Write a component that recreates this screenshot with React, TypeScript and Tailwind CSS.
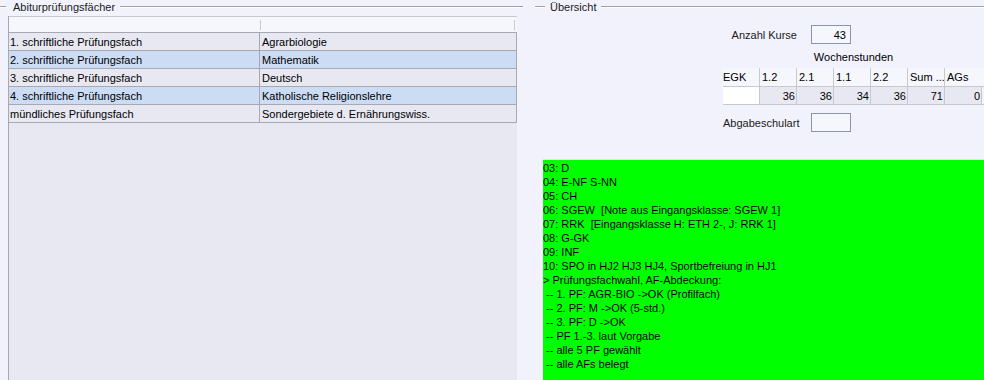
const rows = [
  { a: "1. schriftliche Prüfungsfach", b: "Agrarbiologie", sel: false },
  { a: "2. schriftliche Prüfungsfach", b: "Mathematik", sel: true },
  { a: "3. schriftliche Prüfungsfach", b: "Deutsch", sel: false },
  { a: "4. schriftliche Prüfungsfach", b: "Katholische Religionslehre", sel: true },
  { a: "mündliches Prüfungsfach", b: "Sondergebiete d. Ernährungswiss.", sel: false },
];

const cols = ["EGK", "1.2", "2.1", "1.1", "2.2", "Sum ...", "AGs"];
const vals = ["", "36", "36", "34", "36", "71", "0"];

const notes = [
  "03: D",
  "04: E-NF S-NN",
  "05: CH",
  "06: SGEW  [Note aus Eingangsklasse: SGEW 1]",
  "07: RRK  [Eingangsklasse H: ETH 2-, J: RRK 1]",
  "08: G-GK",
  "09: INF",
  "10: SPO in HJ2 HJ3 HJ4, Sportbefreiung in HJ1",
  "> Prüfungsfachwahl, AF-Abdeckung:",
  " -- 1. PF: AGR-BIO ->OK (Profilfach)",
  " -- 2. PF: M ->OK (5-std.)",
  " -- 3. PF: D ->OK",
  " -- PF 1.-3. laut Vorgabe",
  " -- alle 5 PF gewählt",
  " -- alle AFs belegt",
];

function Legend({ title, lead, gap }: { title: string; lead: number; gap: number }) {
  return (
    <div className="flex items-center h-[14px]">
      <div className="h-[2px] border-t border-[#a0a0a8] border-b-white border-b" style={{ width: lead }} />
      <span className="px-[5px] text-[#1a1a1a]" style={{ marginLeft: gap }}>{title}</span>
      <div className="flex-1 h-[2px] border-t border-[#a0a0a8] border-b border-b-white" />
    </div>
  );
}

export default function App() {
  return (
    <div className="w-[984px] h-[380px] overflow-hidden bg-[#f2f2fd] flex text-[11px] leading-[14px] text-black" style={{ fontFamily: '"Liberation Sans", Arial, sans-serif' }}>
      {/* Abiturprüfungsfächer */}
      <div className="w-[523px] flex flex-col">
        <Legend title="Abiturprüfungsfächer" lead={6} gap={2} />
        <div className="ml-[8px] mt-[2px] w-[509px] flex-1 flex flex-col bg-[#e8e8f2] border-l border-[#a8a8b0]">
          <div className="h-[16px] bg-[#f6f6fd] border-t border-[#c8c8d0] flex items-center">
            <div className="w-[251px] h-full" />
            <div className="w-px h-[10px] bg-[#c8c8d0]" />
            <div className="flex-1" />
            <div className="w-px h-[10px] bg-[#c8c8d0] mr-[2px]" />
          </div>
          {rows.map((r) => (
            <div key={r.a} className={`flex h-[18px] border-t border-[#a8a8b0] border-r ${r.sel ? "bg-[#ccdcf5]" : "bg-[#e8e8f2]"}`}>
              <div className="w-[251px] pl-[1px] flex items-center border-r border-[#a8a8b0]">{r.a}</div>
              <div className="flex-1 pl-[2px] flex items-center">{r.b}</div>
            </div>
          ))}
          <div className="border-t border-[#a8a8b0]" />
        </div>
      </div>

      {/* Übersicht */}
      <div className="flex-1 flex flex-col pl-[12px]">
        <Legend title="Übersicht" lead={10} gap={0} />
        <div className="ml-[188px] mt-[11px] flex items-center h-[19px]">
          <div className="w-[74px] text-right text-[#1a1a1a]">Anzahl Kurse</div>
          <div className="ml-[14px] w-[40px] h-[19px] border border-[#8894b0] bg-[#f6f6fd] flex items-center justify-end pr-[4px]">43</div>
        </div>
        <div className="ml-[188px] mt-[6px] w-[261px] text-center">Wochenstunden</div>
        <div className="ml-[188px] mt-[4px] w-[261px] flex flex-col">
          <div className="flex h-[18px] bg-[#f6f6fd]">
            {cols.map((c, i) => (
              <div key={c} className={`w-[37px] flex items-center whitespace-nowrap overflow-hidden ${i > 0 ? "pl-[2px]" : ""} ${i < 6 ? "border-r border-[#c8c8d0]" : ""}`}>{c}</div>
            ))}
          </div>
          <div className="flex h-[19px] border-t border-b border-[#c8c8d0]">
            {vals.map((v, i) => (
              <div key={i} className={`w-[37px] flex items-center justify-end pr-[1px] border-r border-[#c8c8d0] ${i === 0 ? "bg-white" : "bg-[#e8e8f2]"}`}>{v}</div>
            ))}
          </div>
        </div>
        <div className="ml-[188px] mt-[8px] flex items-center h-[19px]">
          <div className="w-[88px] text-[#1a1a1a]">Abgabeschulart</div>
          <div className="w-[40px] h-[19px] border border-[#8894b0] bg-[#f6f6fd]" />
        </div>
        <div className="ml-[8px] mt-[27px] flex-1 bg-[#00ff00] border-t border-[#d8e8d8] pt-[1px] whitespace-pre">
          {notes.map((n) => (
            <div key={n} className="h-[14px]">{n}</div>
          ))}
        </div>
      </div>
    </div>
  );
}
